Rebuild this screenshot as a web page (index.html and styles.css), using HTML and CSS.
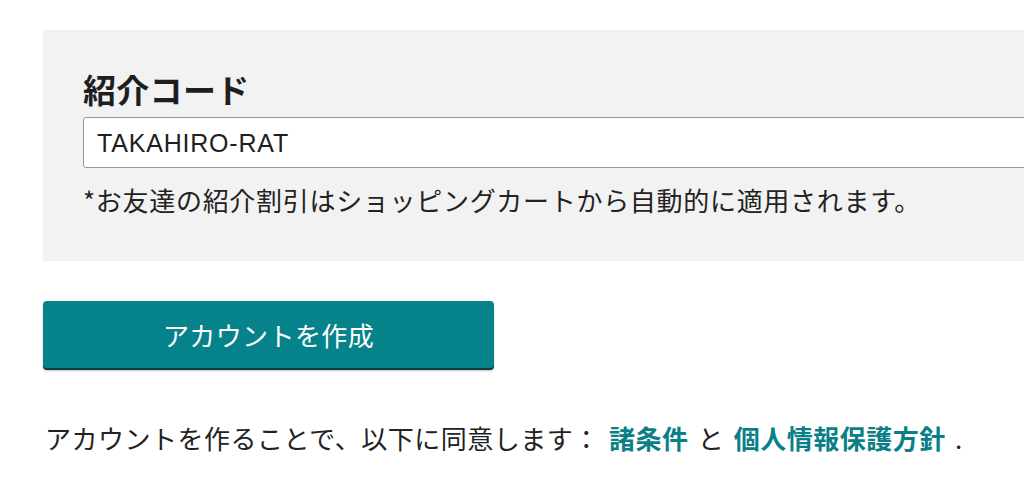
FILE: index.html
```html
<!DOCTYPE html>
<html lang="ja">
<head>
<meta charset="utf-8">
<link rel="stylesheet" href="styles.css">
</head>
<body>
<main class="page">
  <section class="referral">
    <h2 class="referral-title">紹介コード</h2>
    <input class="referral-input" type="text" value="TAKAHIRO-RAT">
    <p class="referral-note">*お友達の紹介割引はショッピングカートから自動的に適用されます。</p>
  </section>
  <button class="create-btn" type="button">アカウントを作成</button>
  <p class="agree">アカウントを作ることで、以下に同意します： <a class="link" href="#">諸条件</a> と <a class="link" href="#">個人情報保護方針</a> .</p>
</main>
</body>
</html>
```

FILE: styles.css
```css
html, body {
  margin: 0;
  padding: 0;
  overflow: hidden;
  background: #ffffff;
}
body {
  font-family: "Noto Sans CJK JP", "Noto Sans", sans-serif;
  color: #222222;
}
.page {
  padding: 30px 0 0 43px;
  width: 1200px;
}
.referral {
  background: #f2f2f2;
  padding: 40px 0 43px 40px;
  display: flex;
  flex-direction: column;
}
.referral-title {
  margin: 0;
  font-size: 33px;
  line-height: 38px;
  font-weight: 700;
  color: #1e1e1e;
  letter-spacing: 0.3px;
}
.referral-input {
  margin-top: 9px;
  box-sizing: border-box;
  height: 51px;
  width: 100%;
  border: 1px solid #8e99a5;
  border-radius: 3px;
  background: #ffffff;
  padding: 2px 13px 0;
  font-family: "Liberation Sans", "Noto Sans CJK JP", sans-serif;
  font-size: 25px;
  letter-spacing: 0.8px;
  color: #1e1e1e;
  outline: none;
}
.referral-note {
  margin: 14px 0 0;
  font-size: 26px;
  line-height: 36px;
  letter-spacing: 0.7px;
  color: #222222;
}
.create-btn {
  margin-top: 40px;
  width: 451px;
  height: 67px;
  border: none;
  border-radius: 4px;
  background: #06828b;
  box-shadow: 0 2px 0 #0d3d40, 0 3px 2px rgba(0,0,0,0.25);
  color: #ffffff;
  font-family: "Noto Sans CJK JP", sans-serif;
  font-size: 26px;
  letter-spacing: 0.4px;
  display: block;
  padding: 0;
}
.agree {
  margin: 52px 0 0 2px;
  font-size: 26px;
  line-height: 36px;
  letter-spacing: 0.5px;
  word-spacing: 3px;
  color: #222222;
}
.link {
  color: #0b7f87;
  font-weight: 700;
  text-decoration: none;
}
```
